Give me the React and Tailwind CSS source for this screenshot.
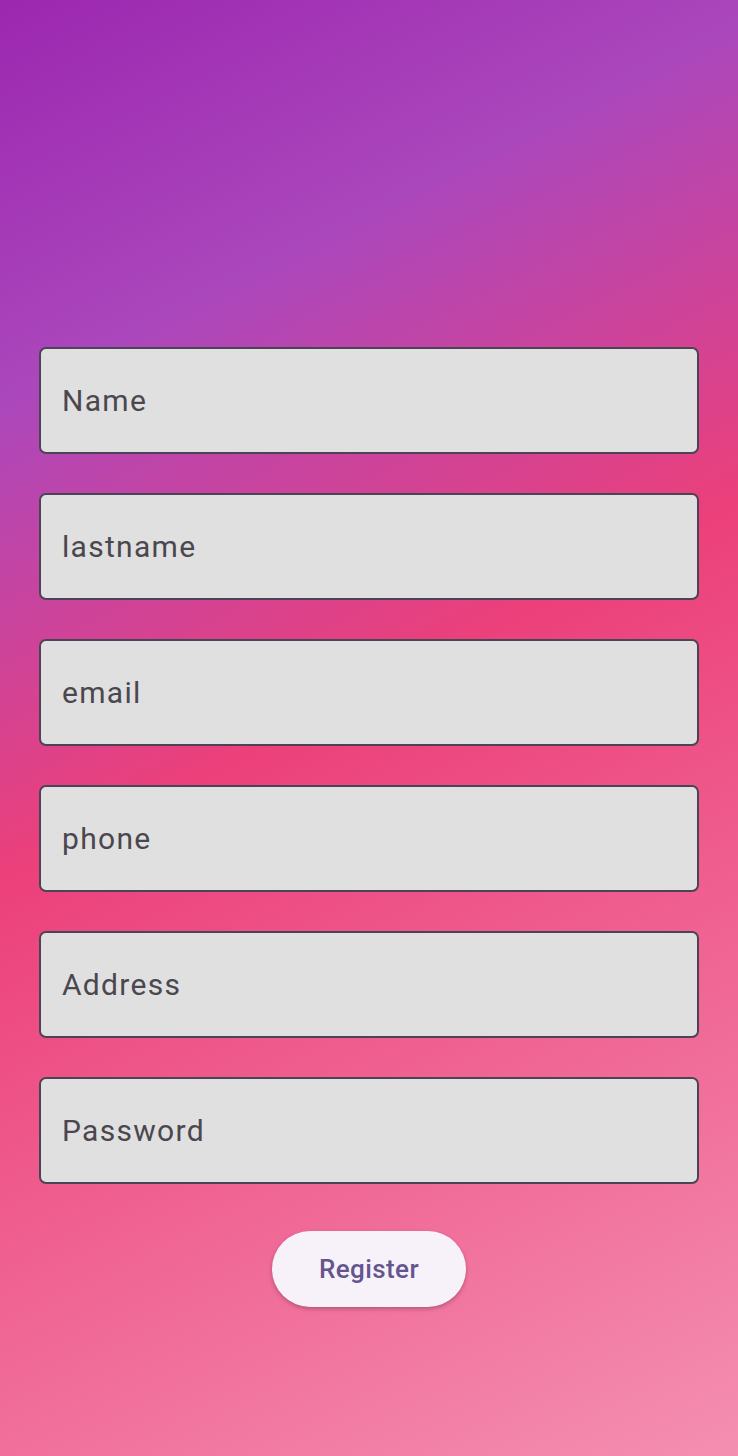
const fields = ["Name", "lastname", "email", "phone", "Address", "Password"];

const Field = ({ label }) => {
  return (
    <div className="h-[107px] w-full rounded-[7px] border-2 border-[#4d4356] bg-[#e0e0e0] flex items-center px-[21px]">
      <span className="text-[30px] tracking-[1.3px] text-[#4a474f]">{label}</span>
    </div>
  );
};

export default function App() {
  return (
    <div
      className="min-h-[1456px] w-full bg-[linear-gradient(153deg,#9c27b0_0%,#ab47bc_22%,#ec407a_48%,#f48fb1_100%)] px-[39px] pt-[347px] flex flex-col items-center"
      style={{ fontFamily: "Roboto, 'Noto Sans', sans-serif" }}
    >
      <div className="w-full flex flex-col gap-[39px]">
        {fields.map((f) => (
          <Field key={f} label={f} />
        ))}
      </div>

      <button className="mt-[47px] h-[76px] w-[194px] rounded-full bg-[#f7f2fa] text-[#65558f] text-[26px] font-medium tracking-[0.4px] shadow-[0_2px_4px_rgba(0,0,0,0.25)]">
        Register
      </button>
    </div>
  );
}
